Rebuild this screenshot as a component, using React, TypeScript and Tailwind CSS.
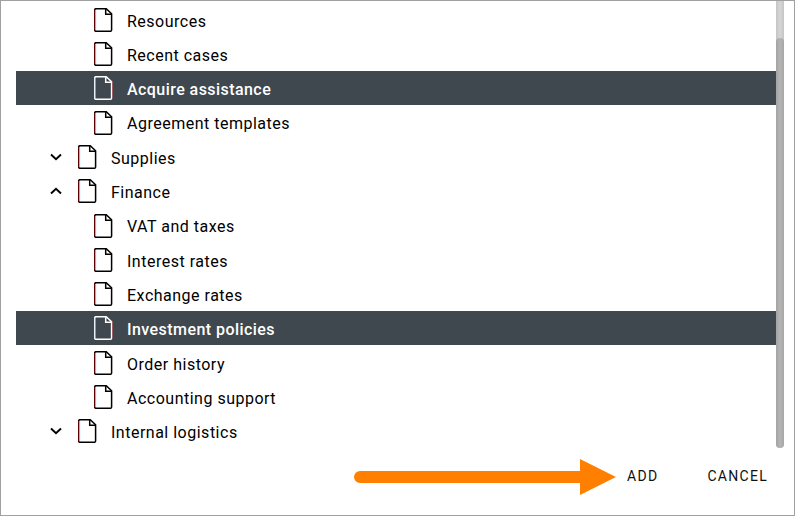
type Item = {
  label: string;
  level: 1 | 2;
  state?: "open" | "closed";
  selected?: boolean;
};

const items: Item[] = [
  { label: "Resources", level: 2 },
  { label: "Recent cases", level: 2 },
  { label: "Acquire assistance", level: 2, selected: true },
  { label: "Agreement templates", level: 2 },
  { label: "Supplies", level: 1, state: "closed" },
  { label: "Finance", level: 1, state: "open" },
  { label: "VAT and taxes", level: 2 },
  { label: "Interest rates", level: 2 },
  { label: "Exchange rates", level: 2 },
  { label: "Investment policies", level: 2, selected: true },
  { label: "Order history", level: 2 },
  { label: "Accounting support", level: 2 },
  { label: "Internal logistics", level: 1, state: "closed" },
];

function PageIcon({ selected }: { selected?: boolean }) {
  return (
    <svg className="mt-[0.3px] block h-6 w-[19px] shrink-0" viewBox="0 0 19 24" fill="none">
      <path
        d="M2 .7H12.2L17.6 5.8V22Q17.6 23.3 16.3 23.3H2Q.7 23.3 .7 22V2Q.7 .7 2 .7Z"
        stroke="currentColor"
        strokeWidth="1.5"
      />
      <path d="M11.7 1V6.3H17" stroke="currentColor" strokeWidth="1.5" />
      <path d="M.5 2V22" stroke={selected ? "#e3f0fa" : "#5d0000"} />
      <path d={selected ? "M18.5 6V22" : "M1.9 2V22"} stroke={selected ? "#b05058" : "#b9e2fa"} strokeWidth=".7" />
    </svg>
  );
}

function Chevron({ open }: { open: boolean }) {
  return (
    <svg className="block h-2 w-3" viewBox="0 0 12 8" fill="none">
      <path d={open ? "M1 6.5 6 1.7 11 6.5" : "M1 1.5 6 6.3 11 1.5"} stroke="#000" strokeWidth="1.9" />
    </svg>
  );
}

function Row({ item }: { item: Item }) {
  return (
    <li
      className={`flex h-[34.3px] items-center ${item.level === 2 ? "pl-[78px]" : "pl-[34px]"} ${
        item.selected ? "bg-[#40484f] font-medium text-white" : "text-black"
      }`}
    >
      {item.level === 1 && (
        <span className="mr-4 flex w-3 shrink-0">
          <Chevron open={item.state === "open"} />
        </span>
      )}
      <PageIcon selected={item.selected} />
      <span
        className={`ml-[14px] whitespace-nowrap pt-[3.9px] text-[16px] leading-6 ${
          item.selected ? "tracking-[0.44px]" : "tracking-[0.5px]"
        }`}
      >
        {item.label}
      </span>
    </li>
  );
}

export default function App() {
  return (
    <div className="flex h-[516px] w-[795px] flex-col overflow-hidden border border-[#a0a0a0] bg-white font-['Roboto',sans-serif]">
      <div className="flex h-[447px] shrink-0 pl-[15px]">
        <ul className="w-[760px] pt-[1.5px]">
          {items.map((item) => (
            <Row key={item.label} item={item} />
          ))}
        </ul>
        <div className="w-2 rounded-b-full bg-linear-to-r from-[#c5c5c5] via-[#d6d6d6] to-[#c5c5c5] pt-[37px]">
          <div className="h-[410px] rounded-full bg-linear-to-r from-[#a3a3a3] via-[#b5b5b5] to-[#a6a6a6]" />
        </div>
      </div>
      <div className="flex h-[58px] items-center pl-[353px] text-[14px] text-[#101010]">
        <svg className="block h-9 w-[262px] shrink-0" viewBox="0 0 262 36">
          <path d="M6 12H226V0L262 18 226 36V24H6A6 6 0 0 1 6 12Z" fill="#ff8000" />
        </svg>
        <button className="ml-[11px] pb-[2px] tracking-[1.3px]">ADD</button>
        <button className="ml-[49px] pb-[2px] tracking-[1.3px]">CANCEL</button>
      </div>
    </div>
  );
}
